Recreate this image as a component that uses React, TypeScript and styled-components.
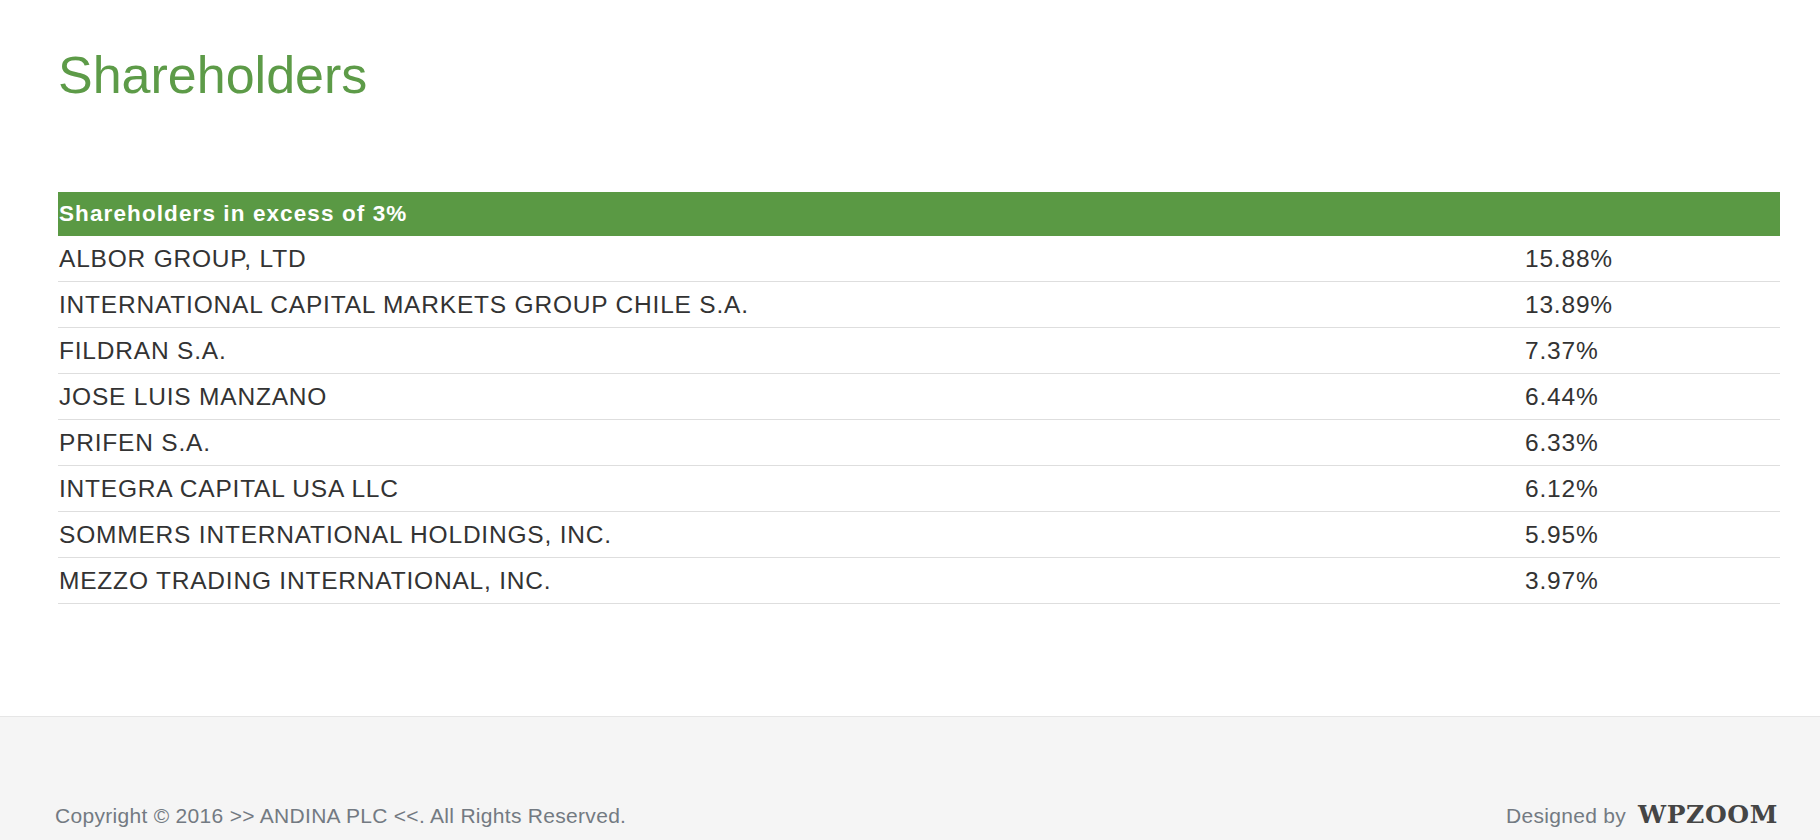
import React from 'react'
import styled, { createGlobalStyle } from 'styled-components'

const GlobalStyle = createGlobalStyle`
  html, body {
    margin: 0;
    padding: 0;
    background: #ffffff;
    font-family: 'Liberation Sans', Arial, sans-serif;
  }
`

const shareholders = [
  { name: 'ALBOR GROUP, LTD', pct: '15.88%' },
  { name: 'INTERNATIONAL CAPITAL MARKETS GROUP CHILE S.A.', pct: '13.89%' },
  { name: 'FILDRAN S.A.', pct: '7.37%' },
  { name: 'JOSE LUIS MANZANO', pct: '6.44%' },
  { name: 'PRIFEN S.A.', pct: '6.33%' },
  { name: 'INTEGRA CAPITAL USA LLC', pct: '6.12%' },
  { name: 'SOMMERS INTERNATIONAL HOLDINGS, INC.', pct: '5.95%' },
  { name: 'MEZZO TRADING INTERNATIONAL, INC.', pct: '3.97%' },
]

const App: React.FC = () => {
  return (
    <Page>
      <GlobalStyle />
      <Main>
        <Title>Shareholders</Title>
        <Table>
          <HeadRow>
            <HeadCell>Shareholders in excess of 3%</HeadCell>
          </HeadRow>
          {shareholders.map((s) => (
            <Row key={s.name}>
              <Cell>{s.name}</Cell>
              <Cell>{s.pct}</Cell>
            </Row>
          ))}
        </Table>
      </Main>
      <Footer>
        <Copyright>Copyright © 2016 &gt;&gt; ANDINA PLC &lt;&lt;. All Rights Reserved.</Copyright>
        <Credit>
          Designed by <Logo>WPZOOM</Logo>
        </Credit>
      </Footer>
    </Page>
  )
}

export default App

const Page = styled.div`
  width: 100%;
  min-height: 840px;
  display: flex;
    flex-direction: column;
`

const Main = styled.div`
  padding: 45px 40px 0 58px;
  height: 716px;
  box-sizing: border-box;
`

const Title = styled.h1`
  margin: 0;
  font-family: 'Liberation Sans', Arial, sans-serif;
  font-weight: 400;
  font-size: 52px;
  line-height: 60px;
  color: #5d9b48;
`

const Table = styled.div`
  margin-top: 87px;
  width: 100%;
`

const HeadRow = styled.div`
  height: 44px;
  background-color: #5a9944;
  display: flex;
    align-items: center;
`

const HeadCell = styled.div`
  font-weight: 700;
  font-size: 22.5px;
  letter-spacing: 1.1px;
  color: #ffffff;
  padding-left: 1px;
`

const Row = styled.div`
  height: 45px;
  border-bottom: 1px solid #dedede;
  display: grid;
    grid-template-columns: 1466px 1fr;
    align-items: center;
`

const Cell = styled.div`
  font-size: 24.5px;
  letter-spacing: 0.8px;
  color: #333333;
  padding-left: 1px;
  white-space: nowrap;
`

const Footer = styled.div`
  flex: 1;
  border-top: 1px solid #e6e6e6;
  background-color: #f5f5f5;
  padding: 83px 42px 0 55px;
  display: flex;
    justify-content: space-between;
    align-items: baseline;
`

const Copyright = styled.div`
  font-size: 21px;
  letter-spacing: 0.3px;
  color: #737a82;
`

const Credit = styled.div`
  font-size: 21px;
  letter-spacing: 0.3px;
  color: #737a82;
  display: flex;
    align-items: baseline;
    gap: 12px;
`

const Logo = styled.span`
  font-family: 'DejaVu Serif', 'Liberation Serif', serif;
  font-weight: 700;
  font-size: 25px;
  letter-spacing: 0.6px;
  color: #454545;
`
